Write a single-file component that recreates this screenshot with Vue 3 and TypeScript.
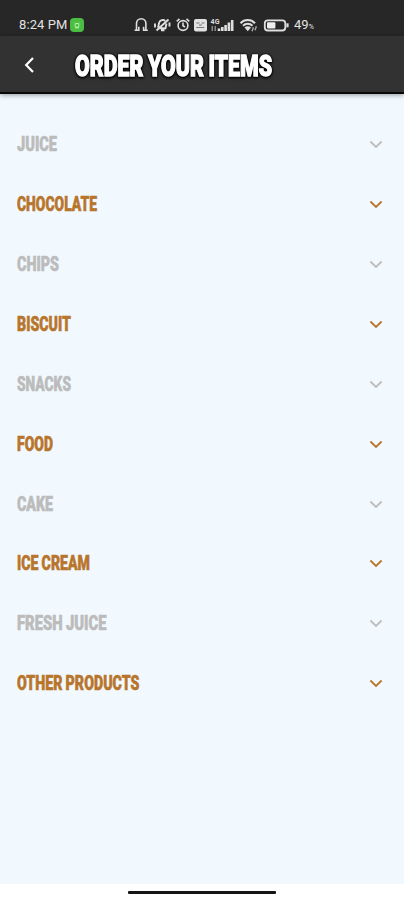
<script setup lang="ts">
interface Category {
  name: string
  width: number
  active: boolean
}

const categories: Category[] = [
  { name: 'JUICE', width: 40, active: false },
  { name: 'CHOCOLATE', width: 80, active: true },
  { name: 'CHIPS', width: 42, active: false },
  { name: 'BISCUIT', width: 54, active: true },
  { name: 'SNACKS', width: 54, active: false },
  { name: 'FOOD', width: 36, active: true },
  { name: 'CAKE', width: 36, active: false },
  { name: 'ICE CREAM', width: 73, active: true },
  { name: 'FRESH JUICE', width: 89.5, active: false },
  { name: 'OTHER PRODUCTS', width: 122.5, active: true },
]
</script>

<template>
  <div class="screen">
    <div class="status">
      <span class="time">8:24 PM</span>
      <span class="app-badge">
        <svg width="8" height="8" viewBox="0 0 8 8" fill="none" stroke="#b9f5ae" stroke-width="1">
          <circle cx="4" cy="4.3" r="2" /><path d="M1.5 1.7l1 1M6.5 1.7l-1 1M2 6.8h4" />
        </svg>
      </span>
      <svg class="indicators" width="160" height="20" viewBox="0 0 160 20" fill="none" stroke="#dedede" stroke-width="1.6">
        <!-- headphones -->
        <path d="M3.5 15V8.5a4.7 4.7 0 0 1 9.4 0V15M1.6 15.2h4.2v-3.5M14.8 15.2h-4.2v-3.5" />
        <!-- muted bell -->
        <path d="M25 12.7l1.2-5.2a4 4 0 0 1 6-1.8M33.5 8.5l-1 4.8h-6.5M28 15.3h3.5M23.5 15.5L35.5 4.5M22 8.5v4M36.5 7.5v4" stroke-width="1.9" />
        <!-- alarm -->
        <circle cx="50" cy="10.5" r="4.9" /><path d="M50 7.5v3.3l2 1.2M43.7 6.3l2.8-2.4M56.3 6.3l-2.8-2.4" />
        <!-- VoLTE -->
        <rect x="61" y="4" width="13" height="12.5" rx="2" fill="#e2e2e2" stroke="none" />
        <path d="M63.3 8h3.2M68.5 8H71.5M63.3 12.5h8M66 10h3" stroke="#777" stroke-width="1.1" />
        <!-- signal -->
        <g fill="#dedede" stroke="none">
          <text x="77.5" y="8.5" font-size="7" font-weight="700" textLength="9">4G</text>
          <path fill="#888" d="M78.5 11h1.5v5h-1.5zM81.5 11h1.5v5h-1.5z" />
          <path d="M84.7 13.5h2.6V16h-2.6zM88 12h2.6v4h-2.6zM91.3 10h2.6v6h-2.6zM94.6 7.5h2.6V16h-2.6zM97.9 5h2.6v11h-2.6z" />
        </g>
        <!-- wifi -->
        <path d="M107.5 8.2a10 10 0 0 1 14.5 0M110 10.8a6.6 6.6 0 0 1 9.5 0" stroke-width="2" />
        <path d="M111.5 12.6a4.7 4.7 0 0 1 6.5 0l-3.2 3.6z" fill="#dedede" stroke="none" />
        <path d="M119 16.3l1.4-4M122 15.3l1.4-4" stroke="#aaa" stroke-width="1.4" />
        <!-- battery -->
        <rect x="131.8" y="5.3" width="20.5" height="10.2" rx="3" stroke-width="1.8" />
        <rect x="134" y="7.3" width="8.4" height="6.2" rx="1" fill="#eee" stroke="none" />
        <path d="M154.5 8.3v4" stroke-width="2.2" />
      </svg>
      <span class="percent">49<small>%</small></span>
    </div>

    <header class="bar">
      <svg class="back" width="12" height="18" viewBox="0 0 12 18" fill="none" stroke="#fff" stroke-width="2.2">
        <path d="M10 3.1L3.2 10l6.8 6.9" />
      </svg>
      <svg class="title" width="220" height="56" viewBox="0 0 220 56">
        <text x="4" y="40" textLength="197" lengthAdjust="spacingAndGlyphs">ORDER YOUR ITEMS</text>
      </svg>
    </header>

    <main class="list">
      <div v-for="c in categories" :key="c.name" class="row" :class="{ active: c.active }">
        <svg class="label" width="160" height="36" viewBox="0 0 160 36">
          <text x="0" y="25" :textLength="c.width" lengthAdjust="spacingAndGlyphs">{{ c.name }}</text>
        </svg>
        <svg class="chevron" width="14" height="10" viewBox="0 0 14 10" fill="none" stroke="currentColor" stroke-width="1.8">
          <path d="M1.4 2.5L7 8 12.6 2.5" />
        </svg>
      </div>
    </main>

    <footer class="nav"><div class="handle"></div></footer>
  </div>
</template>

<style>
body {
  background: #fff;
}
</style>

<style scoped>
.screen {
  width: 404px;
  height: 900px;
  display: flex;
  flex-direction: column;
  background: #f1f9ff;
  font-family: Roboto, "Liberation Sans", sans-serif;
  overflow: hidden;
}
.status {
  box-sizing: border-box;
  height: 36px;
  flex: none;
  padding: 14px 0 0 19px;
  display: flex;
  align-items: center;
  background: #272727;
  color: #e2e2e2;
}
.time {
  width: 51px;
  font-size: 13px;
  line-height: 20px;
  letter-spacing: 0.1px;
  white-space: nowrap;
}
.app-badge {
  width: 14px;
  height: 14px;
  border-radius: 4px;
  background: #4cbd43;
  display: flex;
  align-items: center;
  justify-content: center;
}
.indicators {
  margin-left: 49px;
  flex: none;
}
.percent {
  margin-left: 1px;
  padding-top: 1px;
  font-size: 13px;
  line-height: 20px;
}
.percent small {
  font-size: 7px;
}
.bar {
  box-sizing: border-box;
  height: 58px;
  flex: none;
  padding-left: 23px;
  display: flex;
  align-items: center;
  background: #323232;
  border-bottom: 2px solid #080808;
  box-shadow: 0 1px 5px rgba(0, 0, 0, 0.4);
}
.title {
  margin-left: 36px;
  filter: drop-shadow(0 0 1px #000) drop-shadow(0 1px 1px #000);
}
.title text {
  font-size: 30px;
  font-weight: 900;
  word-spacing: -1px;
  fill: #fff;
  stroke: #fff;
  stroke-width: 1.4px;
}
.list {
  flex: 1;
  padding: 20.5px 21px 0 17px;
}
.row {
  height: 59.87px;
  display: flex;
  align-items: center;
  justify-content: space-between;
  color: #bcbcbc;
}
.row.active {
  color: #b8752c;
}
.label text {
  font-size: 20.5px;
  font-weight: 900;
  word-spacing: -0.5px;
  fill: currentColor;
  stroke: currentColor;
  stroke-width: 0.6px;
}
.nav {
  height: 16px;
  flex: none;
  background: #fff;
  display: flex;
  justify-content: center;
}
.handle {
  width: 148px;
  height: 3px;
  margin-top: 6.5px;
  border-radius: 1px;
  background: #151515;
}
</style>
